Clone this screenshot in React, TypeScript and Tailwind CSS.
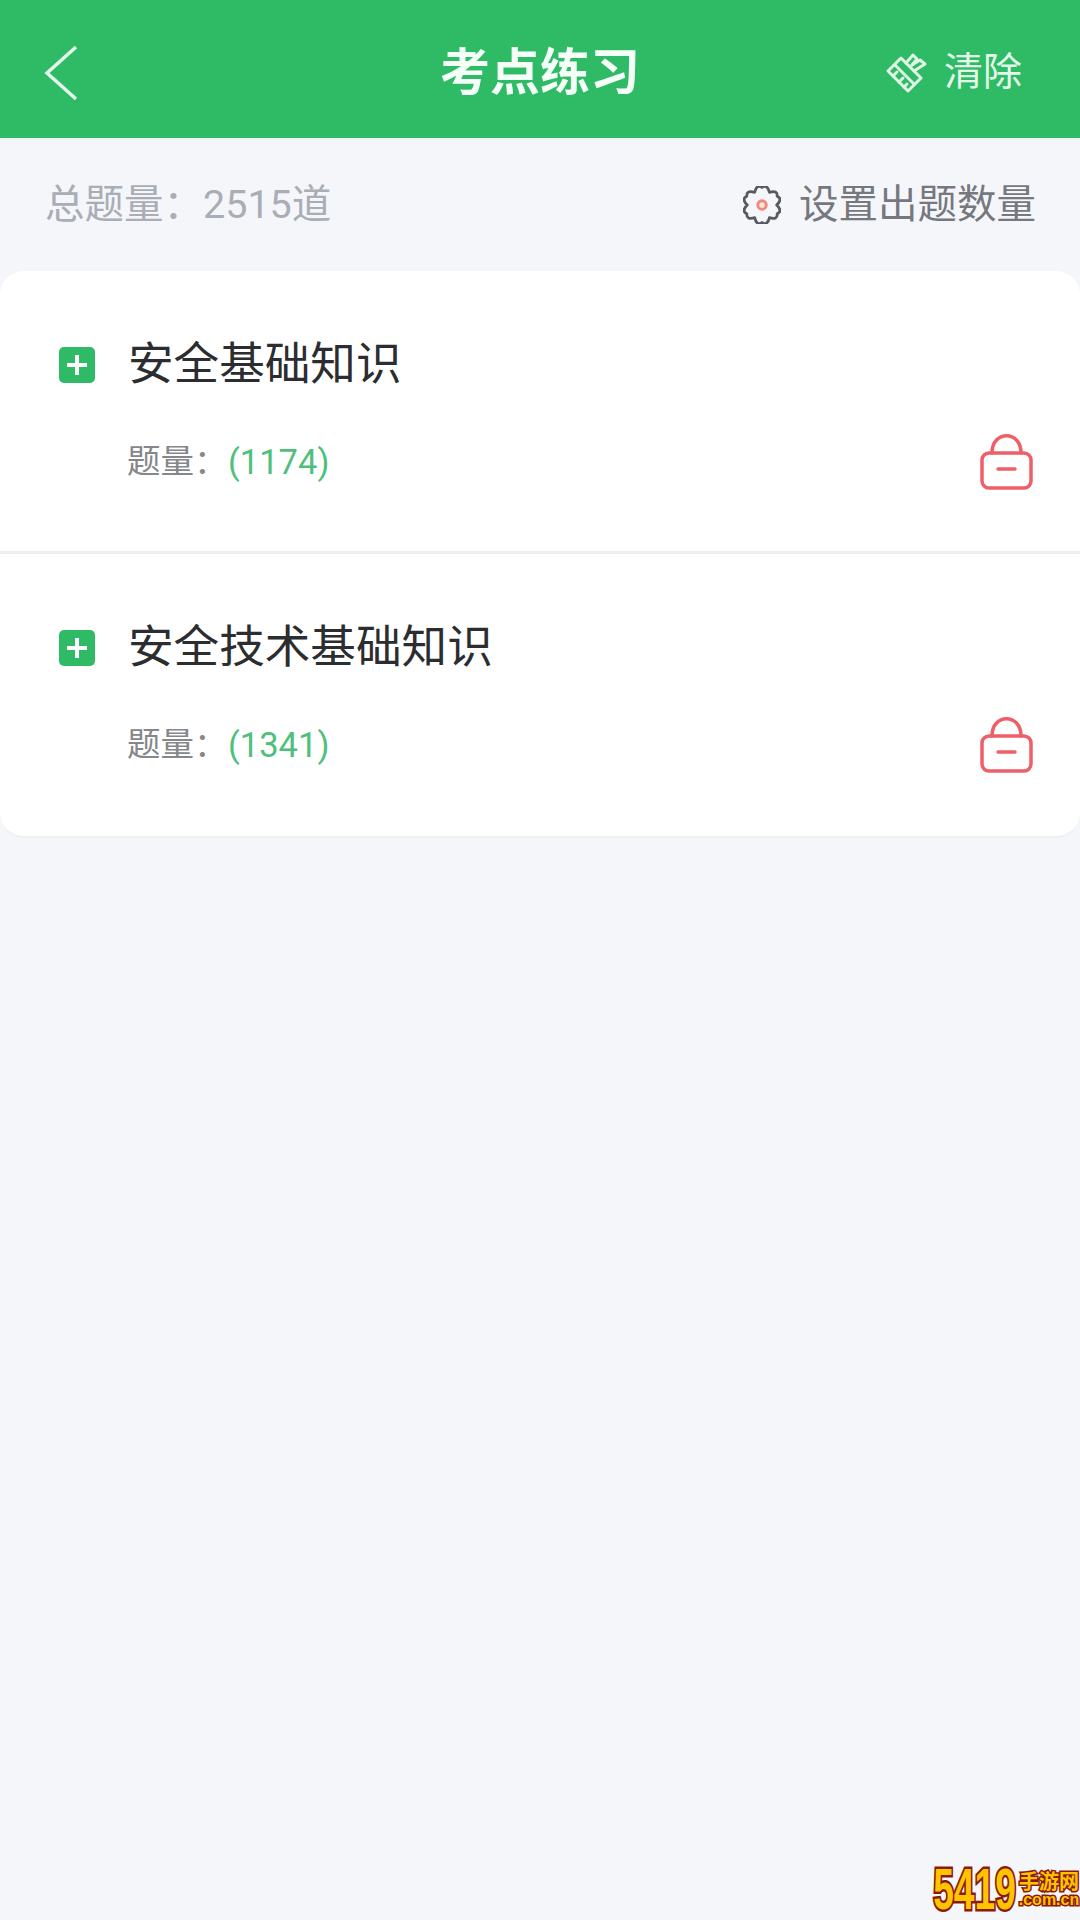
const FONT = "font-['Roboto','Noto_Sans_CJK_SC',sans-serif]";

interface Topic {
  name: string;
  count: number;
}

const topics: Topic[] = [
  { name: "安全基础知识", count: 1174 },
  { name: "安全技术基础知识", count: 1341 },
];

function BackIcon() {
  return (
    <svg className="mt-[8px]" width="34" height="56" viewBox="0 0 34 56" fill="none" stroke="#e4f8ea" strokeWidth="3.5">
      <path d="M32 2 L3 28 L32 54" />
    </svg>
  );
}

function BroomIcon() {
  return (
    <svg width="42" height="42" viewBox="0 0 42 42" fill="none" stroke="#dff6e6" strokeWidth="3" strokeLinejoin="round" strokeLinecap="round">
      <path d="M2 20 L15 7 L35 27 L22 40 Z" />
      <path d="M9 14 L28 33" />
      <path d="M7 25 L11 21 M13 31 L17 27 M18 36 L21 33" />
      <path d="M20 12 L27 4 L31 8 L26 14" />
      <path d="M28 20 L39 13 L34 9 L26 14" />
    </svg>
  );
}

// six rounded lobes around the centre
const gearPath = (() => {
  const at = (deg: number, r: number) => {
    const a = (deg * Math.PI) / 180;
    return `${(20 + r * Math.cos(a)).toFixed(1)} ${(20 + r * Math.sin(a)).toFixed(1)}`;
  };
  let d = `M${at(-120, 15.5)}`;
  for (let i = 0; i < 6; i++) {
    const mid = -90 + i * 60;
    d += ` Q${at(mid - 14, 23)} ${at(mid, 18.5)} Q${at(mid + 14, 23)} ${at(mid + 30, 15.5)}`;
  }
  return d + " Z";
})();

function GearIcon() {
  return (
    <svg width="38" height="38" viewBox="0 0 40 40" fill="none">
      <path d={gearPath} stroke="#565a61" strokeWidth="3" strokeLinejoin="round" />
      <circle cx="20" cy="20" r="4.5" fill="#fbe4df" stroke="#ef8a7c" strokeWidth="3" />
    </svg>
  );
}

function LockIcon() {
  return (
    <svg width="55" height="57" viewBox="0 0 55 57" fill="none" stroke="#ee5f68" strokeWidth="3.5" strokeLinecap="round">
      <rect x="3" y="20" width="49" height="35" rx="7" />
      <path d="M13 20 C13 -3 42 -3 42 20" />
      <path d="M19 36 L36 36" />
    </svg>
  );
}

function PlusBox() {
  return (
    <div className="flex h-9 w-9 shrink-0 items-center justify-center rounded-[5px] bg-[#2fba66]">
      <svg width="24" height="24" viewBox="0 0 24 24" stroke="#ffffff" strokeWidth="4">
        <path d="M12 2 L12 22 M2 12 L22 12" />
      </svg>
    </div>
  );
}

function TopicRow({ topic, last }: { topic: Topic; last: boolean }) {
  return (
    <div className={`flex flex-col pl-[59px] pr-[46px] ${last ? "h-[282px]" : "h-[283px] border-b-[3px] border-[#eeeff1]"}`}>
      <div className="mt-[63px] flex h-[62px] items-center gap-[33px]">
        <PlusBox />
        <span className="text-[45.6px] leading-none text-[#2b2d30]">{topic.name}</span>
      </div>
      <div className="mt-[37px] flex items-start justify-between">
        <div className="ml-[68px] mt-[5px] flex items-center leading-[48px]">
          <span className="w-[101px] text-[33.5px] text-[#85878a]">题量：</span>
          <span className="text-[34.5px] text-[#4fbf7d]">({topic.count})</span>
        </div>
        <LockIcon />
      </div>
    </div>
  );
}

export default function App() {
  return (
    <div className={`${FONT} relative flex h-[1920px] w-[1080px] flex-col overflow-hidden bg-[#f5f6f9]`}>
      {/* Header */}
      <header className="flex h-[138px] items-center justify-between bg-[#2fba66] pl-[44px] pr-[58px]">
        <BackIcon />
        <h1 className="absolute left-0 right-0 top-[48px] text-center text-[50px] font-bold leading-none text-[#f4fff7]">
          考点练习
        </h1>
        <div className="mt-[6px] flex items-center gap-[16px]">
          <BroomIcon />
          <span className="text-[39px] leading-none text-[#e4f8ea]">清除</span>
        </div>
      </header>

      {/* Summary */}
      <div className="flex h-[133px] items-center justify-between pl-[45px] pr-[44px] leading-none">
        <span className="text-[39.5px] text-[#a9adb5]">总题量：2515道</span>
        <div className="flex items-center gap-[18px] text-[#75787e]">
          <GearIcon />
          <span className="text-[39.5px]">设置出题数量</span>
        </div>
      </div>

      {/* Topic list */}
      <div className="overflow-hidden rounded-[24px] border-b-[2px] border-[#eeeff1] bg-white">
        {topics.map((topic, i) => (
          <TopicRow key={topic.name} topic={topic} last={i === topics.length - 1} />
        ))}
      </div>

      {/* Watermark */}
      <div className="absolute bottom-[2px] right-0 flex items-center font-['Liberation_Sans',sans-serif] font-bold text-[#ffc400]">
        <div className="flex w-[86px] justify-center">
          <span className="inline-block origin-center scale-x-[0.64] whitespace-nowrap text-[58px] leading-none [-webkit-text-stroke:5px_#8a1a0a] [paint-order:stroke_fill]">
            5419
          </span>
        </div>
        <div className="flex w-[62px] flex-col items-center">
          <span className={`${FONT} whitespace-nowrap text-[20px] leading-[22px] [-webkit-text-stroke:3px_#8a1a0a] [paint-order:stroke_fill]`}>
            手游网
          </span>
          <span className="whitespace-nowrap text-[16px] leading-[14px] [-webkit-text-stroke:3px_#8a1a0a] [paint-order:stroke_fill]">
            .com.cn
          </span>
        </div>
      </div>
    </div>
  );
}
